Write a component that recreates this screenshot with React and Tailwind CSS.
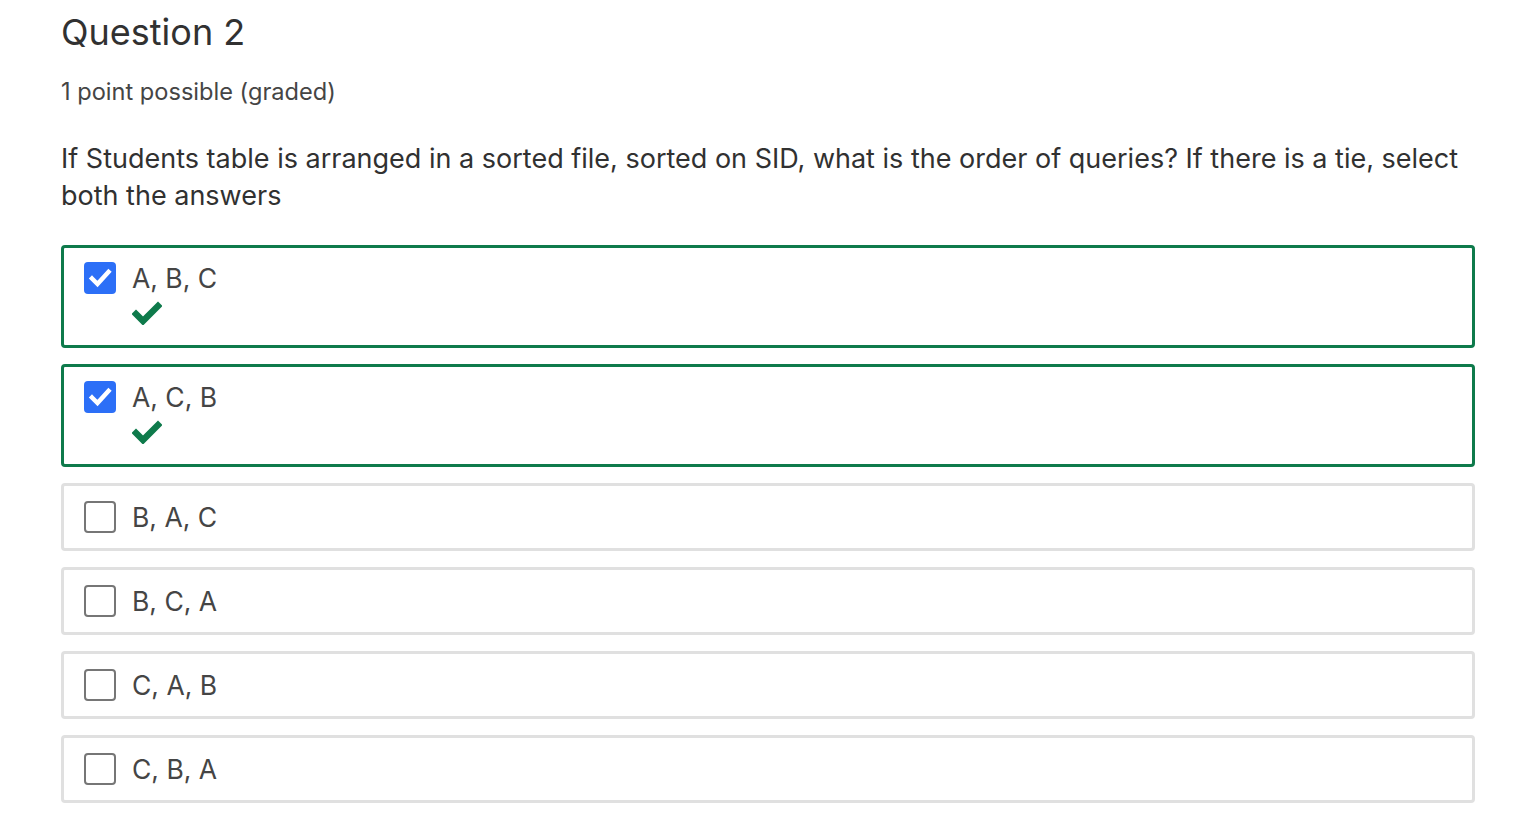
const OPTIONS = [
  { label: 'A, B, C', checked: true },
  { label: 'A, C, B', checked: true },
  { label: 'B, A, C', checked: false },
  { label: 'B, C, A', checked: false },
  { label: 'C, A, B', checked: false },
  { label: 'C, B, A', checked: false },
];

function Option({ label, checked }) {
  return (
    <div
      className={`rounded-[4px] border-[3px] pl-[20px] ${
        checked ? 'border-[#0e7a4b] pt-[13px] pb-[20px]' : 'border-[#e0e0e0] py-[14px]'
      }`}
    >
      <div className="flex items-start">
        {checked ? (
          <span className="mt-[1px] flex h-[32px] w-[32px] items-center justify-center rounded-[4px] bg-[#2c6ff7]">
            <svg width="32" height="32" viewBox="0 0 32 32">
              <path d="M8 16.5 L13.5 22 L24.5 10" fill="none" stroke="#fff" strokeWidth="4.5" strokeLinecap="square" />
            </svg>
          </span>
        ) : (
          <span className="mt-[1px] h-[32px] w-[32px] rounded-[4px] border-2 border-[#767676] bg-white" />
        )}
        <div className="ml-[16px]">
          <div className="text-[26.5px] leading-[34px] text-[#454545]">{label}</div>
          {checked && (
            <svg width="30" height="24" viewBox="0 0 30 24" className="mt-[6px]">
              <path d="M4 13 L11 20 L26 5" fill="none" stroke="#0e7a4b" strokeWidth="6.5" strokeLinecap="square" />
            </svg>
          )}
        </div>
      </div>
    </div>
  );
}

export default function App() {
  return (
    <div className="min-h-screen bg-white font-['Inter',sans-serif] text-[#313131]">
      <div className="ml-[61px] mr-[61px] pt-[8px]">
        <h1 className="text-[36px] leading-[48px] text-[#313131]">Question 2</h1>
        <div className="mt-[21px] text-[23.6px] leading-[30px] text-[#454545]">1 point possible (graded)</div>
        <p className="mt-[33px] text-[27px] leading-[37px] text-[#313131]">
          If Students table is arranged in a sorted file, sorted on SID, what is the order of queries? If there is a tie, select both the answers
        </p>
        <div className="mt-[31px] flex flex-col gap-[16px]">
          {OPTIONS.map((o) => (
            <Option key={o.label} {...o} />
          ))}
        </div>
      </div>
    </div>
  );
}
